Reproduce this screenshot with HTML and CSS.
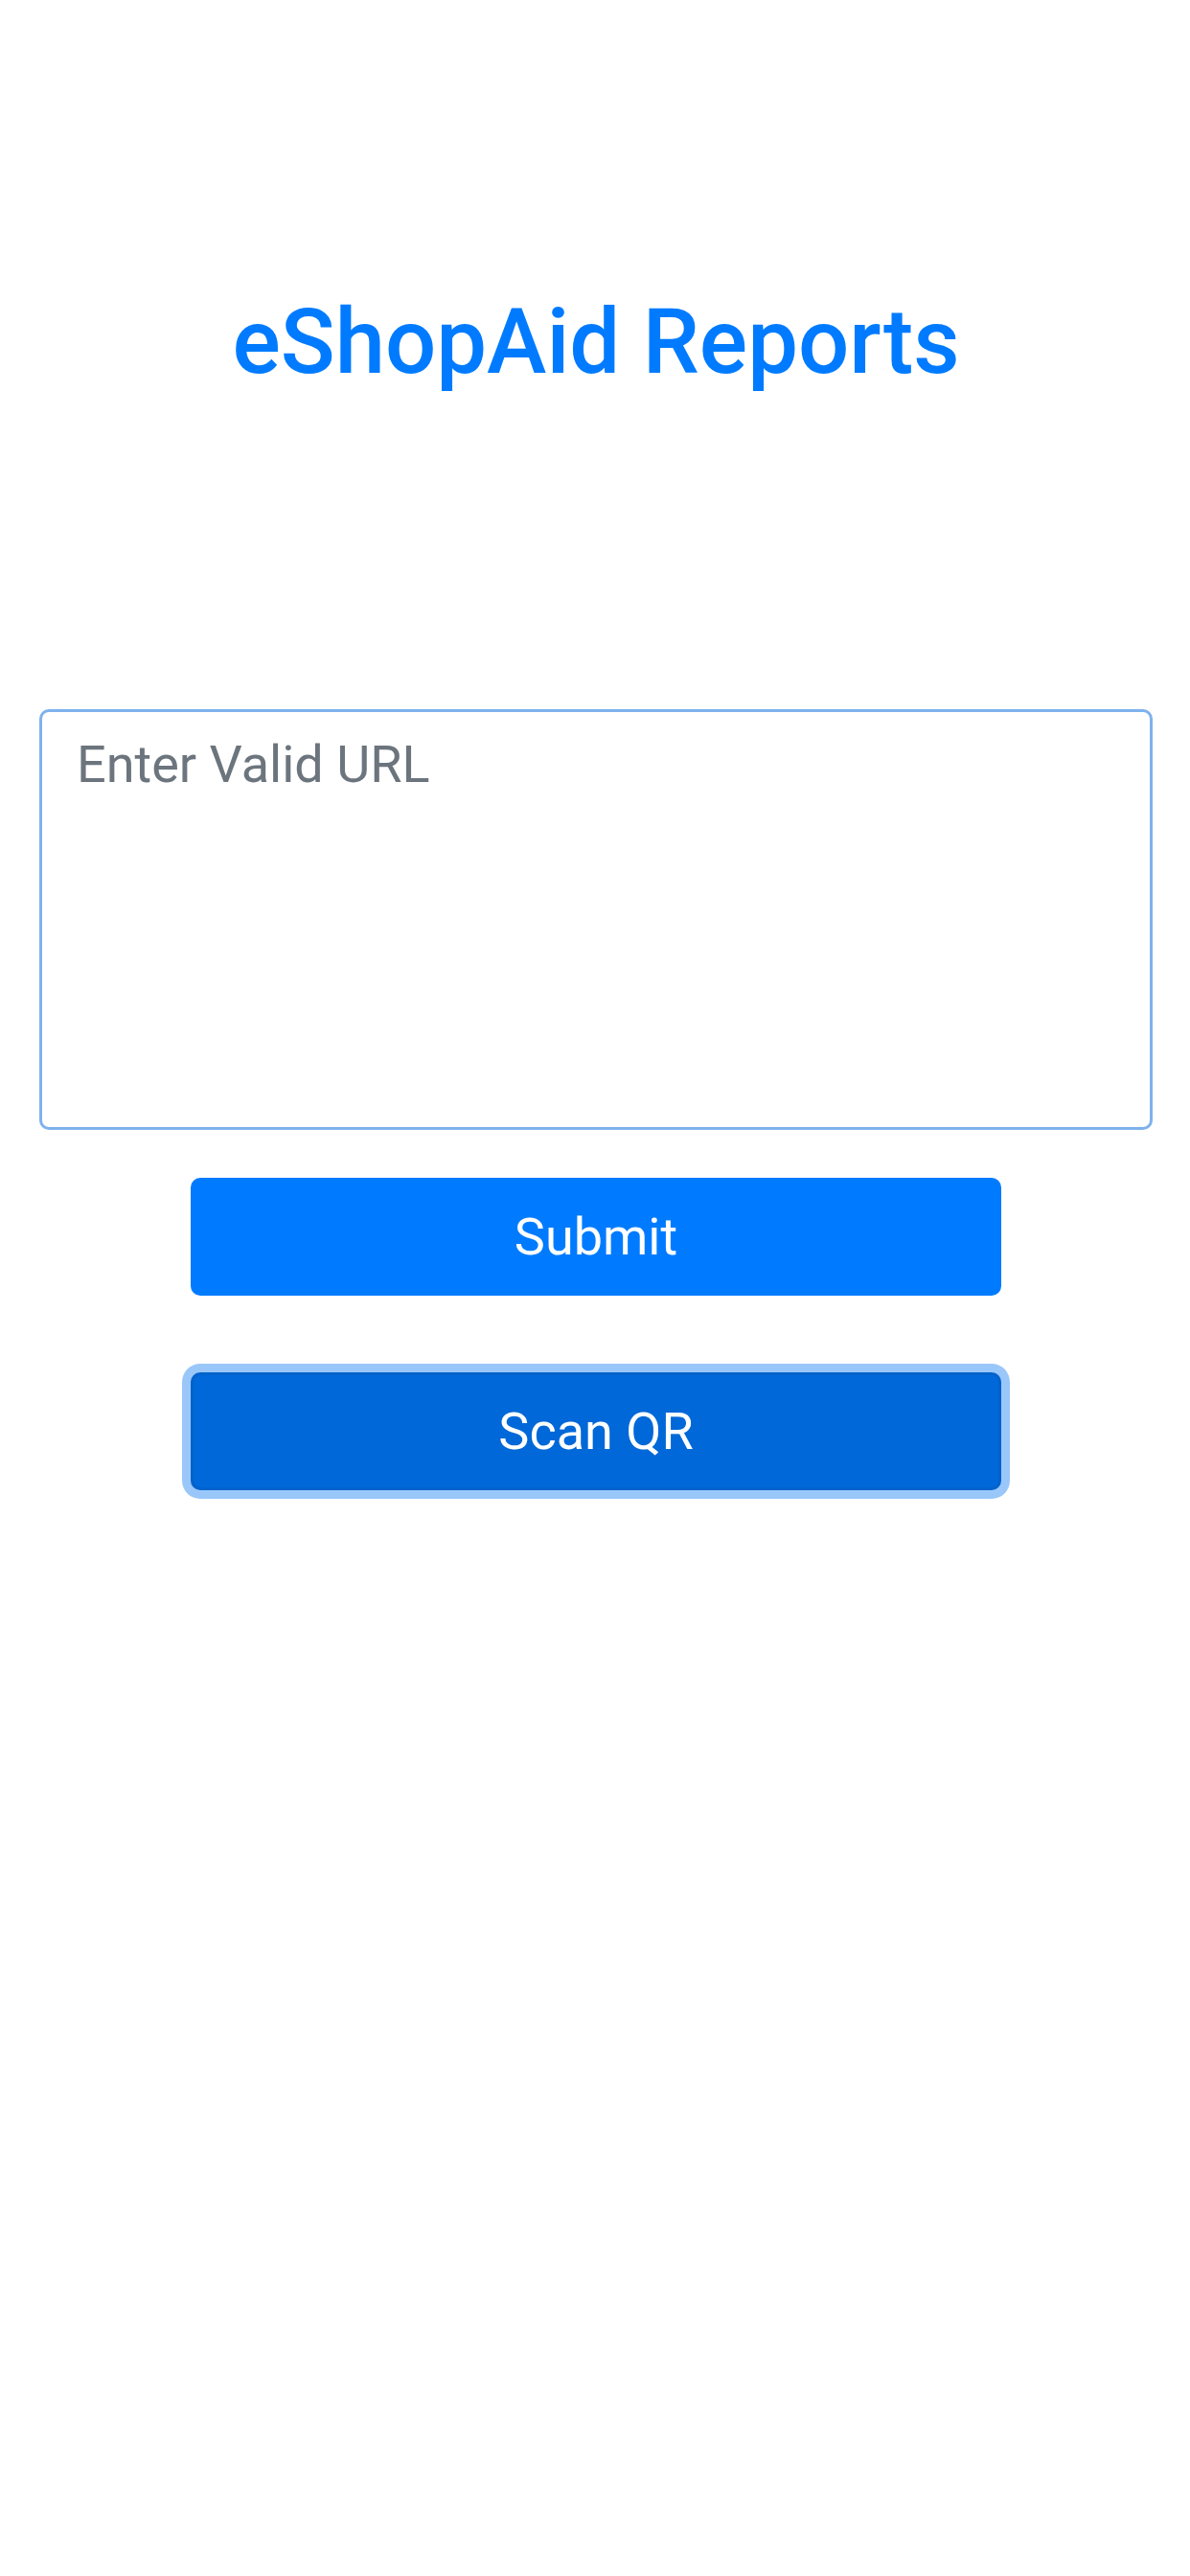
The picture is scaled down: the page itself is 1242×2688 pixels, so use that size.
FILE: index.html
```html
<!DOCTYPE html>
<html lang="en">
<head>
<meta charset="utf-8">
<title>eShopAid Reports</title>
<link rel="stylesheet" href="styles.css">
</head>
<body>
<main class="page">
  <h1 class="title">eShopAid Reports</h1>
  <form class="form">
    <textarea class="url-input" placeholder="Enter Valid URL"></textarea>
    <div class="actions">
      <button type="button" class="btn btn-submit">Submit</button>
      <button type="button" class="btn btn-scan">Scan QR</button>
    </div>
  </form>
</main>
</body>
</html>
```

FILE: styles.css
```css
html, body {
  margin: 0;
  padding: 0;
  background: #ffffff;
}

body {
  font-family: Roboto, "Liberation Sans", Arial, sans-serif;
  width: 1242px;
  min-height: 2688px;
}

.page {
  display: flex;
  flex-direction: column;
  align-items: center;
  padding: 301px 39px 0 41px;
}

.title {
  margin: 0;
  font-size: 94px;
  font-weight: 500;
  line-height: 1.2;
  color: #007bff;
  text-align: center;
}

.form {
  width: 100%;
  display: flex;
  flex-direction: column;
  align-items: center;
  margin-top: 326px;
}

.url-input {
  box-sizing: border-box;
  display: block;
  width: 1162px;
  height: 439px;
  margin: 0;
  padding: 14px 36px;
  border: 3px solid #7eb2ec;
  border-radius: 10px;
  font-family: Roboto, "Liberation Sans", Arial, sans-serif;
  font-size: 54px;
  line-height: 1.5;
  color: #495057;
  background: #ffffff;
  resize: none;
  outline: none;
}

.url-input::placeholder {
  color: #6c757d;
  opacity: 1;
}

.actions {
  display: flex;
  flex-direction: column;
  align-items: center;
  gap: 80px;
  margin-top: 50px;
}

.btn {
  box-sizing: border-box;
  width: 846px;
  height: 123px;
  padding: 18px 36px;
  border: 3px solid transparent;
  border-radius: 10px;
  font-family: Roboto, "Liberation Sans", Arial, sans-serif;
  font-size: 54px;
  font-weight: 400;
  line-height: 1.5;
  color: #ffffff;
  text-align: center;
  cursor: pointer;
}

.btn-submit {
  background: #007bff;
  border-color: #007bff;
}

.btn-scan {
  background: #0068d8;
  border-color: #0062cc;
  box-shadow: 0 0 0 9px #9ac7fa;
}
```
